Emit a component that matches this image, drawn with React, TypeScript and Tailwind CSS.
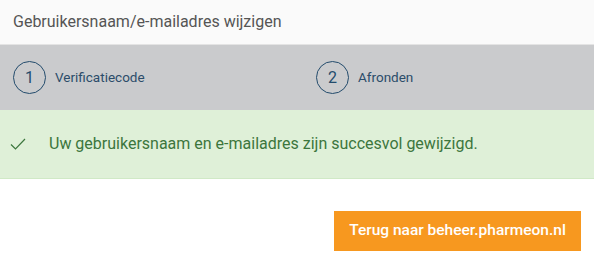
import React from "react";

export default function App() {
  return (
    <div className="w-[594px] h-[262px] bg-white font-['Roboto',sans-serif]">
      <div className="h-[45px] bg-[#fafafa] border-b border-[#e4e4e4] flex items-center px-[13px] text-[16px] text-[#555555]">
        Gebruikersnaam/e-mailadres wijzigen
      </div>
      <div className="h-[65px] bg-[#cacbcd] flex items-center">
        <div className="w-[316px] pl-[13px] flex items-center">
          <div className="w-[33px] h-[33px] rounded-full border border-[#234b6c] flex items-center justify-center text-[16px] text-[#234b6c]">
            1
          </div>
          <span className="ml-[9px] text-[13.5px] text-[#2c4d6a]">Verificatiecode</span>
        </div>
        <div className="flex items-center">
          <div className="w-[33px] h-[33px] rounded-full border border-[#234b6c] flex items-center justify-center text-[16px] text-[#234b6c]">
            2
          </div>
          <span className="ml-[9px] text-[13.5px] text-[#2c4d6a]">Afronden</span>
        </div>
      </div>
      <div className="h-[69px] bg-[#dff0d8] border-b border-[#d0e9c6] flex items-center text-[#3c763d]">
        <svg className="ml-[10px]" width="16" height="12" viewBox="0 0 16 12" fill="none">
          <path d="M1 6.5 L5.5 11 L15 1" stroke="#3c763d" strokeWidth="1.2" />
        </svg>
        <span className="ml-[23px] text-[16px]">
          Uw gebruikersnaam en e-mailadres zijn succesvol gewijzigd.
        </span>
      </div>
      <div className="flex justify-end pr-[13px] pt-[32px]">
        <button className="w-[247px] h-[40px] bg-[#f7981f] text-white text-[15.5px] font-medium flex items-center justify-center">
          Terug naar beheer.pharmeon.nl
        </button>
      </div>
    </div>
  );
}
